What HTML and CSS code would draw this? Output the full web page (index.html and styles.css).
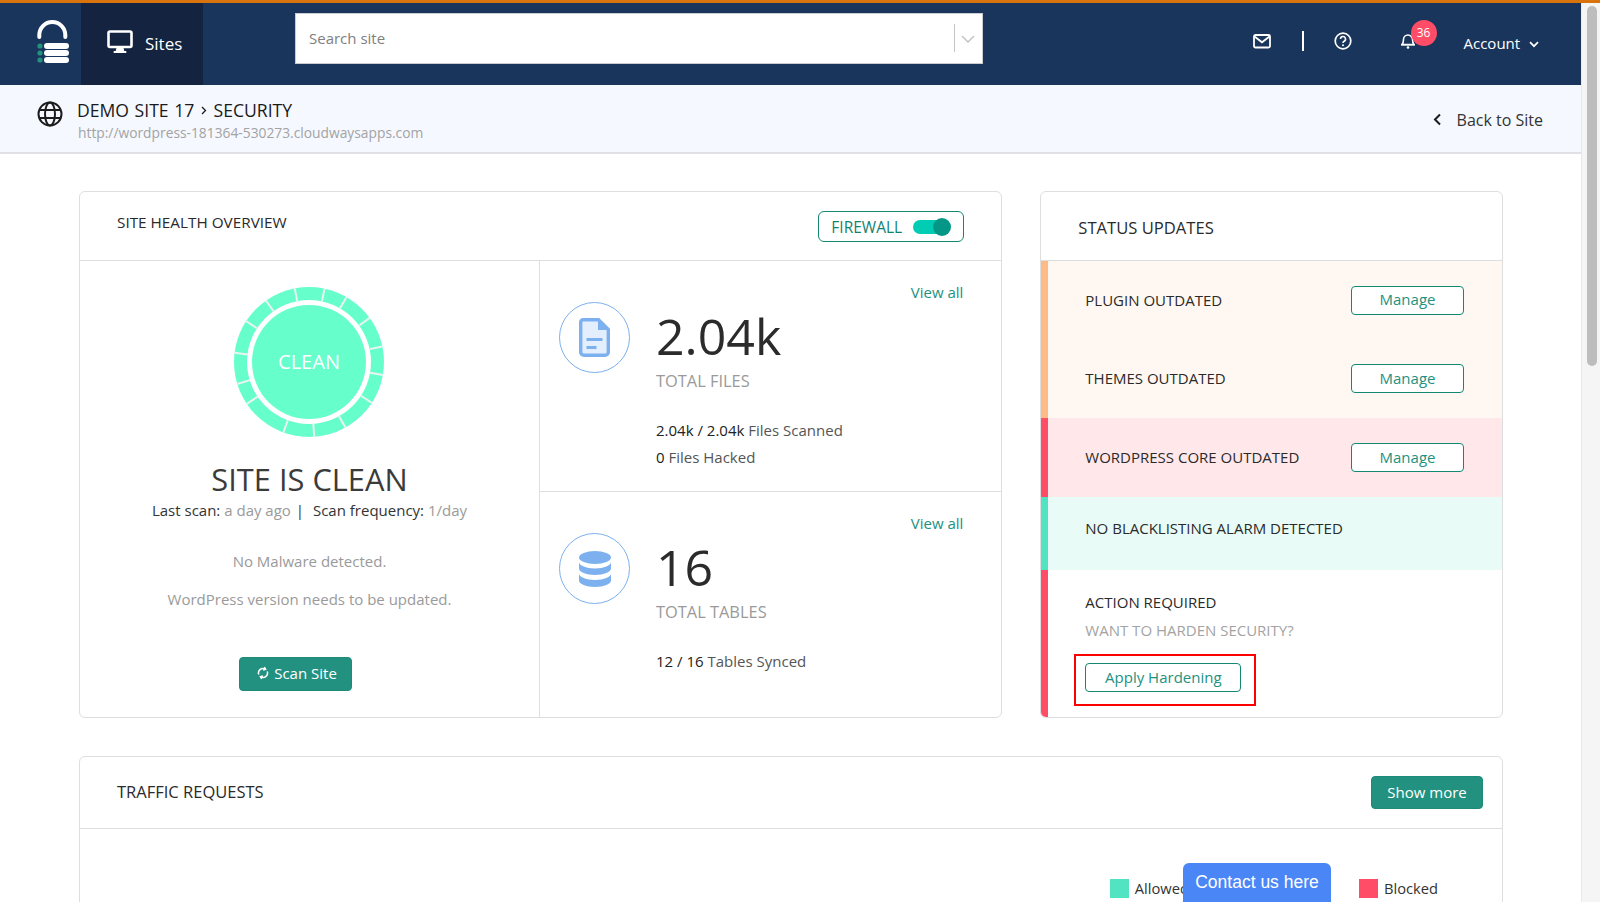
FILE: index.html
```html
<!DOCTYPE html>
<html lang="en">
<head>
<meta charset="utf-8">
<title>Security</title>
<link rel="stylesheet" href="styles.css">
</head>
<body>
<div class="app">
  <div class="main">
    <header class="nav">
      <div class="logo">
        <svg width="36" height="44" viewBox="0 0 36 44">
          <path d="M3.300 17V15A13 13 0 0 1 29.300 15V17" fill="none" stroke="#fff" stroke-width="4" stroke-linecap="round"/>
          <rect x="8" y="23" width="25" height="6" rx="3" fill="#fff"/>
          <rect x="8" y="30" width="25" height="6" rx="3" fill="#fff"/>
          <rect x="8" y="37" width="25" height="6" rx="3" fill="#fff"/>
          <circle cx="4" cy="26" r="2.600" fill="#23917f"/>
          <circle cx="4" cy="33" r="2.600" fill="#23917f"/>
          <circle cx="4" cy="40" r="2.600" fill="#23917f"/>
        </svg>
      </div>
      <div class="sites">
        <svg width="26" height="24" viewBox="0 0 26 24">
          <rect x="1.500" y="1.500" width="23" height="15.500" rx="1.500" fill="none" stroke="#fff" stroke-width="2.600"/>
          <path d="M9.500 18h7l.8 3h2v2H6.700v-2h2z" fill="#fff"/>
        </svg>
        <span>Sites</span>
      </div>
      <div class="search">
        <span class="search-ph">Search site</span>
        <span class="search-sep"></span>
        <svg class="search-chev" width="14" height="8" viewBox="0 0 14 8"><path d="M1 1l6 6 6-6" fill="none" stroke="#c4c4c4" stroke-width="1.500"/></svg>
      </div>
      <div class="nav-right">
        <svg class="i-mail" width="18" height="15" viewBox="0 0 18 15"><rect x="1" y="1" width="16" height="12.500" rx="1.500" fill="none" stroke="#fff" stroke-width="1.800"/><path d="M1.500 2.500L9 8.300l7.500-5.800" fill="none" stroke="#fff" stroke-width="1.800"/></svg>
        <span class="nav-bar"></span>
        <svg class="i-help" width="18" height="18" viewBox="0 0 18 18"><circle cx="9" cy="9" r="7.800" fill="none" stroke="#fff" stroke-width="1.700"/><path d="M6.500 7a2.500 2.500 0 1 1 3.700 2.200c-.8.500-1.200.9-1.200 1.800" fill="none" stroke="#fff" stroke-width="1.600"/><circle cx="9" cy="13.200" r="1" fill="#fff"/></svg>
        <div class="bell">
          <svg width="16" height="18" viewBox="0 0 16 18"><path d="M2 13.500c1.200-1.300 1.500-2.400 1.500-5a4.500 4.500 0 0 1 9 0c0 2.600.3 3.700 1.500 5z" fill="none" stroke="#fff" stroke-width="1.600" stroke-linejoin="round"/><path d="M1 13.800h14" stroke="#fff" stroke-width="1.600"/><circle cx="8" cy="16.500" r="1.300" fill="#fff"/></svg>
          <span class="badge">36</span>
        </div>
        <div class="account">
          <span>Account</span>
          <svg width="10" height="7" viewBox="0 0 10 7"><path d="M1 1.200l4 4 4-4" fill="none" stroke="#fff" stroke-width="1.700"/></svg>
        </div>
      </div>
    </header>

    <section class="sub">
      <svg class="globe" width="26" height="26" viewBox="0 0 26 26" fill="none" stroke="#1c1c1c" stroke-width="2">
        <circle cx="13" cy="13" r="11.500"/>
        <ellipse cx="13" cy="13" rx="5" ry="11.500"/>
        <path d="M2.500 9h21M2.500 17h21"/>
      </svg>
      <div class="sub-text">
        <div class="crumb">DEMO SITE 17 <svg class="crumb-gt" width="6" height="9" viewBox="0 0 6 9"><path d="M1 1l3.500 3.500L1 8" fill="none" stroke="#1a1a1a" stroke-width="1.300"/></svg> SECURITY</div>
        <div class="url">http://wordpress-181364-530273.cloudwaysapps.com</div>
      </div>
      <div class="back">
        <svg width="9" height="13" viewBox="0 0 9 13"><path d="M7 1.500L2 6.500l5 5" fill="none" stroke="#1c1c1c" stroke-width="2"/></svg>
        <span>Back to Site</span>
      </div>
    </section>

    <div class="content">
      <div class="top-row">
        <section class="card health">
          <div class="health-head">
            <h2 class="card-title">SITE HEALTH OVERVIEW</h2>
            <div class="firewall">
              <span>FIREWALL</span>
              <span class="toggle"><span class="knob"></span></span>
            </div>
          </div>
          <div class="health-body">
            <div class="overview">
              <svg class="ring" width="152" height="152" viewBox="-76 -76 152 152">
                <circle r="75" fill="#66ffcc"/>
                <circle r="62" fill="#fff"/>
                <circle r="57" fill="#66ffcc"/>
                <g stroke="#eaf4f0" stroke-width="2">
                  <line y1="-62" y2="-75" transform="rotate(-11)"/>
                  <line y1="-62" y2="-75" transform="rotate(12)"/>
                  <line y1="-62" y2="-75" transform="rotate(30)"/>
                  <line y1="-62" y2="-75" transform="rotate(54)"/>
                  <line y1="-62" y2="-75" transform="rotate(78)"/>
                  <line y1="-62" y2="-75" transform="rotate(100)"/>
                  <line y1="-62" y2="-75" transform="rotate(123)"/>
                  <line y1="-62" y2="-75" transform="rotate(151)"/>
                  <line y1="-62" y2="-75" transform="rotate(176)"/>
                  <line y1="-62" y2="-75" transform="rotate(200)"/>
                  <line y1="-62" y2="-75" transform="rotate(236)"/>
                  <line y1="-62" y2="-75" transform="rotate(253)"/>
                  <line y1="-62" y2="-75" transform="rotate(277)"/>
                  <line y1="-62" y2="-75" transform="rotate(303)"/>
                  <line y1="-62" y2="-75" transform="rotate(325)"/>
                </g>
                <text class="ring-text" y="7" text-anchor="middle">CLEAN</text>
              </svg>
              <h3 class="clean-title">SITE IS CLEAN</h3>
              <p class="scan-line"><b>Last scan:</b> <span class="muted">a day ago</span> <span class="sep">|</span> <b>Scan frequency:</b> <span class="muted">1/day</span></p>
              <p class="note first">No Malware detected.</p>
              <p class="note">WordPress version needs to be updated.</p>
              <button class="btn-solid scan">
                <svg width="12" height="14" viewBox="0 0 12 14" fill="none" stroke="#fff" stroke-width="1.500"><path d="M1.800 8.500A4.300 4.300 0 0 1 8 3.200"/><path d="M10.200 5.500A4.300 4.300 0 0 1 4 10.800"/><path d="M7.300 1l1.300 2.300-2.500.7M4.700 13L3.400 10.700l2.500-.7"/></svg>
                Scan Site
              </button>
            </div>
            <div class="stats">
              <div class="stat stat-files">
                <div class="circle">
                  <svg width="31" height="39" viewBox="0 0 31 39"><path d="M4 1.700h15.500l9.800 9.800V34a3.300 3.300 0 0 1-3.300 3.300H5A3.300 3.300 0 0 1 1.700 34V4A2.300 2.300 0 0 1 4 1.700z" fill="#e3efff" stroke="#7db0ee" stroke-width="3.400"/><path d="M19 0l12 12H19z" fill="#7db0ee"/><rect x="7.500" y="20" width="16" height="3" fill="#7db0ee"/><rect x="7.500" y="28" width="10" height="3" fill="#7db0ee"/></svg>
                </div>
                <div class="stat-info">
                  <a class="view-all">View all</a>
                  <div class="big">2.04k</div>
                  <div class="big-label">TOTAL FILES</div>
                  <p class="line"><span class="dark">2.04k / 2.04k</span> Files Scanned</p>
                  <p class="line"><span class="dark">0</span> Files Hacked</p>
                </div>
              </div>
              <div class="stat stat-tables">
                <div class="circle">
                  <svg width="32" height="36" viewBox="0 0 32 36" fill="#7db0ee"><ellipse cx="16" cy="6.500" rx="16" ry="6.500"/><path d="M0 11c0 3.500 7 6.500 16 6.500S32 14.500 32 11v6.500C32 21 25 24 16 24S0 21 0 17.500z"/><path d="M0 22.500c0 3.500 7 6.500 16 6.500s16-3 16-6.500v7C32 33 25 36 16 36S0 33 0 29.500z"/></svg>
                </div>
                <div class="stat-info">
                  <a class="view-all">View all</a>
                  <div class="big">16</div>
                  <div class="big-label">TOTAL TABLES</div>
                  <p class="line"><span class="dark">12 / 16</span> Tables Synced</p>
                </div>
              </div>
            </div>
          </div>
        </section>

        <section class="card status">
          <div class="status-head"><h2 class="status-title">STATUS UPDATES</h2></div>
          <div class="st-group st-orange">
            <div class="st-row"><span>PLUGIN OUTDATED</span><button class="btn-line manage">Manage</button></div>
            <div class="st-row"><span>THEMES OUTDATED</span><button class="btn-line manage">Manage</button></div>
          </div>
          <div class="st-group st-red">
            <div class="st-row"><span>WORDPRESS CORE OUTDATED</span><button class="btn-line manage">Manage</button></div>
          </div>
          <div class="st-group st-green">
            <div class="st-row short"><span>NO BLACKLISTING ALARM DETECTED</span></div>
          </div>
          <div class="st-group st-action">
            <div class="act-title">ACTION REQUIRED</div>
            <div class="act-sub">WANT TO HARDEN SECURITY?</div>
            <div class="hl"><button class="btn-line apply">Apply Hardening</button></div>
          </div>
        </section>
      </div>

      <section class="card traffic">
        <div class="traffic-head">
          <h2 class="traffic-title">TRAFFIC REQUESTS</h2>
          <button class="btn-solid more">Show more</button>
        </div>
        <div class="legend">
          <span class="swatch sw-green"></span><span class="lg-text allowed">Allowed</span>
          <span class="swatch sw-red"></span><span class="lg-text">Blocked</span>
        </div>
      </section>
    </div>
  </div>
  <div class="scrollbar"><span class="thumb"></span></div>
</div>
<div class="contact">Contact us here</div>
</body>
</html>
```

FILE: styles.css
```css
* { box-sizing: border-box; }
html, body { margin: 0; height: 902px; overflow: hidden; background: #fff; }
body { font-family: "Open Sans", sans-serif; color: #222; border-top: 3px solid #d9730d; }
h2, h3, p { margin: 0; font-weight: 400; }
button { font-family: inherit; cursor: pointer; }

.app { display: flex; height: 899px; }
.main { flex: 1; min-width: 0; overflow: hidden; }

.nav { height: 82px; background: #1a355b; display: flex; align-items: stretch; color: #fff; }
.logo { width: 81px; display: flex; align-items: center; padding: 0 0 4px 36px; }
.sites { width: 122px; background: #14233f; display: flex; align-items: center; gap: 12px; padding: 0 0 2px 26px; font-size: 17px; }
.sites svg { margin-top: -2px; }
.search { width: 688px; height: 51px; margin: 10px 0 0 92px; background: #fff; border: 1px solid #c9ccd1; display: flex; align-items: center; padding: 0 7px 2px 13px; }
.search-ph { flex: 1; font-size: 15px; color: #808080; }
.search-sep { width: 1px; height: 28px; background: #c4c4c4; margin-right: 6px; }
.search-chev { margin-top: 2px; }
.nav-right { flex: 1; display: flex; align-items: center; padding-bottom: 6px; }
.i-mail { margin-left: 270px; }
.nav-bar { width: 1.500px; height: 20px; background: #fff; margin-left: 31px; }
.i-help { margin-left: 30px; }
.bell { position: relative; margin: -2px 0 0 48px; display: flex; }
.badge { position: absolute; left: 11px; top: -11px; width: 26px; height: 26px; border-radius: 50%; background: #ff4d68; font-size: 12px; line-height: 26px; text-align: center; color: #fff; }
.account { margin-left: 48px; display: flex; align-items: center; gap: 9px; font-size: 15px; padding-top: 3px; }
.account svg { margin-top: 3px; }

.sub { height: 69px; background: #f5f8ff; border-bottom: 2px solid #e0e1e5; display: flex; align-items: center; padding: 0 38px 0 37px; }
.globe { margin-top: -9px; }
.sub-text { margin-left: 14px; flex: 1; margin-top: 3px; }
.crumb { font-size: 17.600px; line-height: 24px; color: #1a1a1a; word-spacing: 1px; }
.crumb-gt { margin: 0 1px; vertical-align: 2px; }
.url { font-size: 13.800px; line-height: 20px; color: #a3a3a3; margin: 1px 0 0 1px; }
.back { display: flex; align-items: center; gap: 15px; font-size: 16px; color: #333; margin-top: 2px; }

.content { padding: 37px 78px 0 79px; }
.top-row { display: flex; gap: 38px; }
.card { background: #fff; border: 1px solid #dedede; border-radius: 6px; }
.card-title { font-size: 15.300px; line-height: 20px; font-weight: 500; color: #2a2a2a; }
.traffic-title { font-size: 16.500px; line-height: 22px; font-weight: 500; color: #2a2a2a; margin-top: -2px; }

.health { width: 924px; height: 527px; }
.health-head { height: 69px; border-bottom: 1px solid #dedede; display: flex; justify-content: space-between; padding: 20px 37px 0 37px; }
.firewall { width: 146px; height: 31px; margin-top: -1px; border: 1px solid #128873; border-radius: 6px; display: flex; align-items: center; justify-content: space-between; padding: 0 14px 0 12px; font-size: 15.500px; color: #12826f; }
.toggle { width: 36px; height: 14px; border-radius: 7px; background: #00cdb4; display: flex; align-items: center; justify-content: flex-end; }
.knob { width: 18px; height: 18px; border-radius: 50%; background: #049686; margin-right: -2px; }
.health-body { display: flex; height: 456px; }

.overview { width: 460px; border-right: 1px solid #dedede; display: flex; flex-direction: column; align-items: center; padding: 25px 0 0 0; }
.ring { display: block; margin-left: -2px; }
.ring-text { font-family: "Open Sans", sans-serif; font-size: 20px; fill: #fff; }
.clean-title { font-size: 30.800px; line-height: 40px; margin-top: 21px; color: #3b3b3b; font-weight: 500; }
.scan-line { font-size: 15px; line-height: 22px; margin-top: 0; color: #333; }
.scan-line b { font-weight: 500; }
.sep { margin: 0 5px 0 1px; }
.muted { color: #9a9a9a; }
.note { font-size: 15px; line-height: 22px; color: #9a9a9a; margin-top: 16px; }
.note.first { margin-top: 29px; }
.btn-solid { background: #23917f; color: #fff; border: 1px solid #1f8a78; border-radius: 4px; font-size: 15px; padding: 0 0 1px; }
.scan { width: 113px; height: 34px; margin: 47px 0 0 -29px; display: flex; align-items: center; justify-content: center; gap: 5px; padding: 0 0 2px 4px; }

.stats { flex: 1; }
.stat { display: flex; padding: 41px 38px 0 19px; }
.stat-files { height: 231px; border-bottom: 1px solid #dedede; }
.stat-tables { height: 225px; }
.circle { width: 71px; height: 71px; border: 1px solid #7db0ee; border-radius: 50%; display: flex; align-items: center; justify-content: center; flex: none; }
.stat-info { flex: 1; margin-left: 26px; }
.view-all { display: block; text-align: right; color: #23917f; font-size: 15px; line-height: 20px; margin-top: -20px; }
.big { font-size: 50px; line-height: 60px; color: #2b2b2b; margin-top: 4px; }
.big-label { font-size: 16.400px; line-height: 22px; color: #9a9a9a; font-weight: 500; margin-top: 4px; }
.line { font-size: 15px; line-height: 27px; color: #555; }
.big-label + .line { margin-top: 25px; }
.dark { color: #222; font-weight: 500; }

.status { width: 463px; height: 527px; overflow: hidden; }
.status-head { height: 69px; border-bottom: 1px solid #dedede; padding: 25px 37px 0; }
.status-title { font-size: 16.600px; line-height: 22px; font-weight: 500; color: #2a2a2a; }
.st-group { border-left: 7px solid; }
.st-orange { background: #fff8f2; border-color: #ffbb85; height: 157px; }
.st-orange .st-row:first-child { height: 78px; }
.st-red { background: #ffe7ea; border-color: #ff4d68; height: 79px; }
.st-green { background: #e9fbf6; border-color: #52e3c2; height: 73px; }
.st-row { display: flex; justify-content: space-between; align-items: center; height: 79px; padding: 0 38px 0 37px; font-size: 15px; color: #2a2a2a; }
.st-row > span { margin-bottom: 1px; }
.st-row.short { height: 62px; }
.btn-line { background: #fff; color: #23917f; border: 1px solid #128873; border-radius: 4px; font-size: 15px; padding: 0 0 2px; }
.manage { width: 113px; height: 29px; }
.st-action { border-color: #ff4d68; padding: 20px 0 0 37px; height: 147px; }
.act-title { font-size: 15px; line-height: 24px; color: #2a2a2a; }
.act-sub { font-size: 15px; line-height: 24px; margin-top: 4px; color: #a3a3a3; }
.hl { display: inline-block; margin: 12px 0 0 -11px; padding: 7px 13px 12px 9px; border: 2px solid #ff0000; }
.apply { width: 156px; height: 29px; display: block; }

.traffic { margin-top: 38px; height: 200px; }
.traffic-head { height: 72px; border-bottom: 1px solid #dedede; display: flex; justify-content: space-between; align-items: center; padding: 0 19px 0 37px; }
.more { width: 112px; height: 33px; }
.legend { display: flex; justify-content: flex-end; align-items: center; padding: 49px 64px 0 0; }
.swatch { width: 19px; height: 19px; }
.sw-green { background: #52e3c2; }
.sw-red { background: #ff4d68; }
.lg-text { font-size: 14.700px; margin-left: 6px; color: #333; }
.allowed { margin-right: 170px; }

.scrollbar { width: 19px; background: #f5f5f5; border-left: 1px solid #e8e8e8; padding: 3px 3px 0 5px; }
.thumb { display: block; width: 10px; height: 360px; border-radius: 5px; background: #bdbdbd; }

.contact { position: fixed; left: 1183px; top: 863px; width: 148px; height: 45px; border-radius: 6px 6px 0 0; background: #4a86f5; color: #fff; font-family: "Liberation Sans", Arial, sans-serif; font-size: 17.500px; line-height: 38px; text-align: center; }
```
